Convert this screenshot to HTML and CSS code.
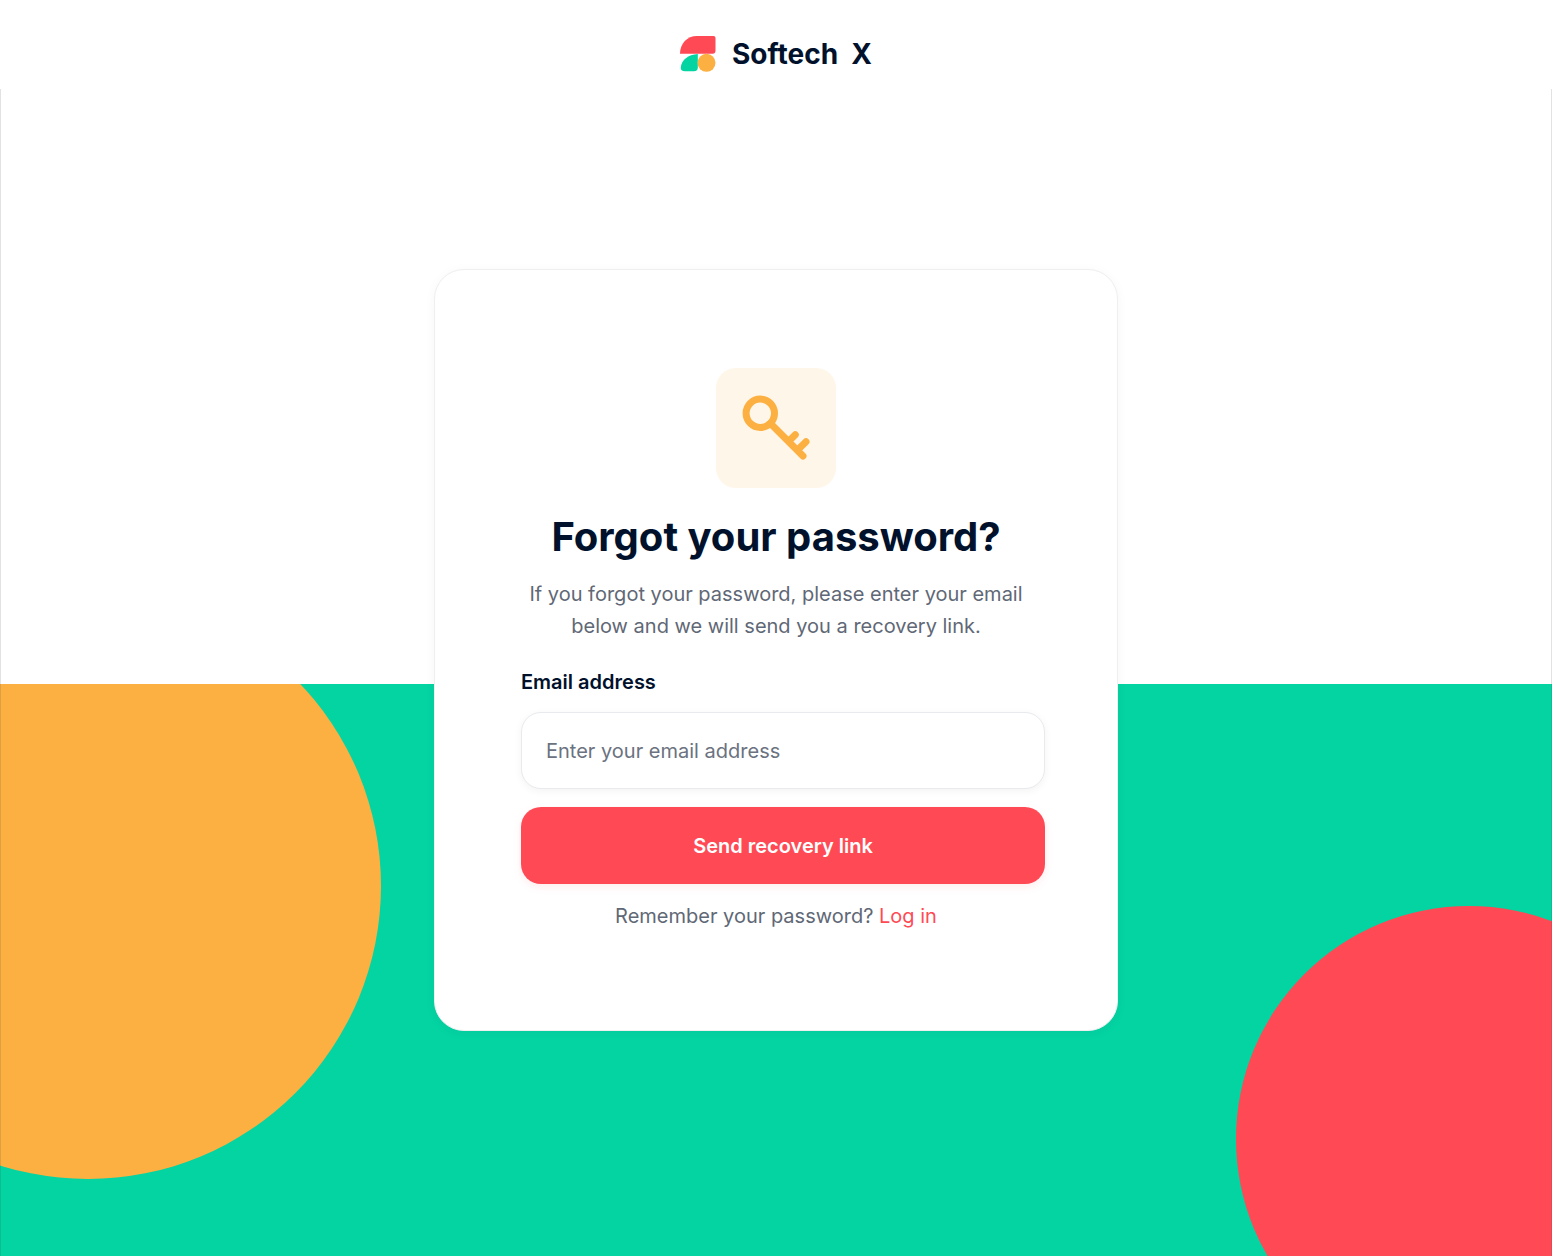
FILE: index.html
```html
<!DOCTYPE html>
<html lang="en">
<head>
<meta charset="utf-8">
<meta name="viewport" content="width=device-width, initial-scale=1">
<title>Forgot your password? – Softech X</title>
<link rel="stylesheet" href="styles.css">
</head>
<body>
<header class="header">
  <a class="brand" href="#">
    <svg class="brand-mark" viewBox="0 0 36 36" aria-hidden="true">
      <path fill="#ff4a55" d="M0 17.800C0 7.500 7 0 17 0H33.500Q35.500 0 35.500 2V14.500Q35.500 17.800 32.500 17.800Z"/>
      <path fill="#04d3a2" d="M17.800 18V31.500Q17.800 35.300 14 35.300H5Q.5 35.300 .8 31.500C1.500 24 8 18.500 17.800 18Z"/>
      <circle cx="26.500" cy="26.800" r="9" fill="#fcb041"/>
    </svg>
    <span class="brand-name">Softech  X</span>
  </a>
</header>
<main class="stage">
  <div class="backdrop" aria-hidden="true">
    <span class="disc disc-amber"></span>
    <span class="disc disc-red"></span>
  </div>
  <section class="card">
    <div class="badge">
      <svg class="key" viewBox="0 0 120 120" aria-hidden="true" fill="none" stroke="#fcb041" stroke-width="7" stroke-linecap="round" stroke-linejoin="round">
        <circle cx="44.300" cy="45.300" r="14.200"/>
        <path d="M54.500 55.500L87 88M72.500 73.500L79.300 66.700M81.300 82.300L90 73.700"/>
      </svg>
    </div>
    <h1 class="title">Forgot your password?</h1>
    <p class="lead">If you forgot your password, please enter your email below and we will send you a recovery link.</p>
    <form class="form">
      <label class="label" for="email">Email address</label>
      <input class="input" id="email" type="email" placeholder="Enter your email address">
      <button class="button" type="submit">Send recovery link</button>
    </form>
    <p class="footnote">Remember your password? <a class="link" href="#">Log in</a></p>
  </section>
</main>
</body>
</html>
```
FILE: styles.css
```css
* {
  box-sizing: border-box;
}

body {
  margin: 0;
  min-height: 100vh;
  display: flex;
  flex-direction: column;
  background: #fff;
  color: #00112c;
  font-family: Inter, "Open Sans", sans-serif;
}

.header {
  display: flex;
  justify-content: center;
  padding: 36px 24px 17px;
}

.brand {
  display: flex;
  align-items: center;
  gap: 16px;
  color: inherit;
  text-decoration: none;
}

.brand-mark {
  width: 36px;
  height: 36px;
}

.brand-name {
  font-size: 28px;
  font-weight: 700;
  line-height: 36px;
  white-space: pre;
}

.stage {
  position: relative;
  flex: 1;
  padding: 180px 24px;
}

/* Hairline frame drawn over the white and green areas alike */
.stage::after {
  content: "";
  position: absolute;
  inset: 0;
  border: solid rgba(60, 60, 67, 0.15);
  border-width: 0 1px;
  pointer-events: none;
}

.backdrop {
  position: absolute;
  inset: auto 0 0;
  height: 49%;
  overflow: hidden;
  background: #04d3a2;
}

.disc {
  position: absolute;
  border-radius: 50%;
}

.disc-amber {
  left: -205px;
  bottom: 77px;
  width: 586px;
  height: 586px;
  background: #fcb041;
}

.disc-red {
  right: -150px;
  bottom: -116px;
  width: 466px;
  height: 466px;
  background: #ff4a55;
}

.card {
  position: relative;
  max-width: 684px;
  margin: 0 auto;
  padding: 98px 72px;
  border: 1px solid #efeff0;
  border-radius: 30px;
  background: #fff;
  box-shadow: 0 2px 12px rgba(20, 20, 43, 0.04);
  text-align: center;
}

.badge {
  width: 120px;
  height: 120px;
  margin: 0 auto 24px;
  border-radius: 20px;
  background: #fff6ea;
}

.key {
  display: block;
}

.title {
  margin: 0 0 16px;
  font-size: 40px;
  font-weight: 700;
  line-height: 50px;
}

.lead {
  max-width: 512px;
  margin: 0 auto 28px;
  color: #5f6876;
  font-size: 20px;
  line-height: 32px;
}

.form {
  display: flex;
  flex-direction: column;
  gap: 18px;
  margin: 0 0 16px 14px;
}

.label {
  font-size: 20px;
  font-weight: 600;
  line-height: 24px;
  text-align: left;
}

.input,
.button {
  width: 100%;
  height: 77px;
  border-radius: 20px;
  font-family: inherit;
  font-size: 20px;
}

.input {
  padding: 0 24px;
  border: 1px solid #e9eaed;
  background: #fff;
  color: #00112c;
  box-shadow: 0 2px 8px rgba(20, 20, 43, 0.05);
}

.input::placeholder {
  color: #6b7280;
  opacity: 1;
}

.button {
  padding: 0 24px;
  border: 0;
  background: #ff4a55;
  color: #fff;
  font-weight: 600;
  box-shadow: 0 3px 8px rgba(255, 74, 85, 0.1);
  cursor: pointer;
}

.footnote {
  margin: 0;
  color: #5f6876;
  font-size: 20px;
  line-height: 32px;
}

.link {
  color: #ff4a55;
  text-decoration: none;
}
```
